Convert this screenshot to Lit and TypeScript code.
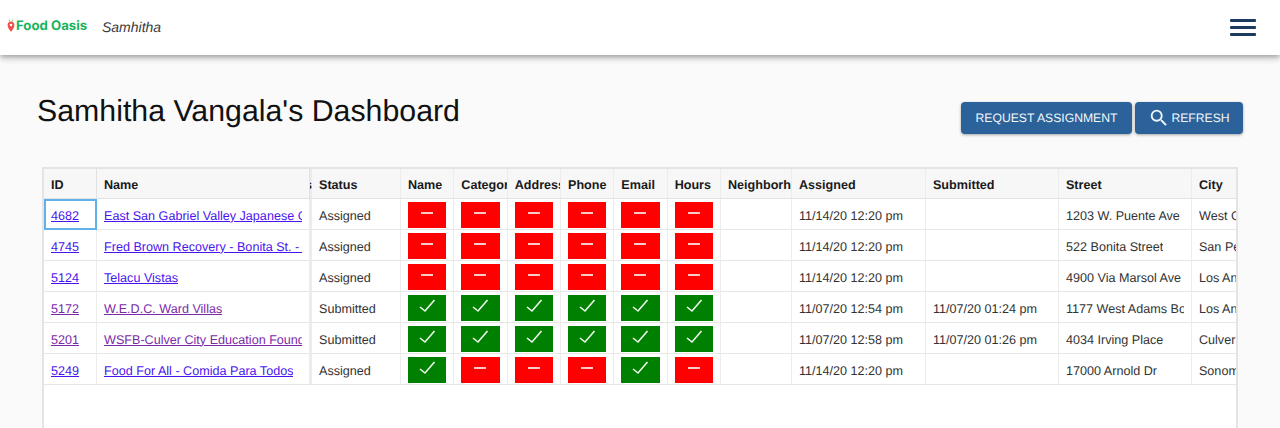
import { LitElement, html, css, svg } from "lit";
import { customElement } from "lit/decorators.js";

type Row = {
  id: string; name: string; status: string; checks: number[];
  assigned: string; submitted: string; street: string; city: string; visited?: boolean;
};

const rows: Row[] = [
  { id: "4682", name: "East San Gabriel Valley Japanese Community Center", status: "Assigned", checks: [0,0,0,0,0,0], assigned: "11/14/20 12:20 pm", submitted: "", street: "1203 W. Puente Ave", city: "West Covina" },
  { id: "4745", name: "Fred Brown Recovery - Bonita St. - San Pedro", status: "Assigned", checks: [0,0,0,0,0,0], assigned: "11/14/20 12:20 pm", submitted: "", street: "522 Bonita Street", city: "San Pedro" },
  { id: "5124", name: "Telacu Vistas", status: "Assigned", checks: [0,0,0,0,0,0], assigned: "11/14/20 12:20 pm", submitted: "", street: "4900 Via Marsol Ave", city: "Los Angeles" },
  { id: "5172", name: "W.E.D.C. Ward Villas", status: "Submitted", checks: [1,1,1,1,1,1], assigned: "11/07/20 12:54 pm", submitted: "11/07/20 01:24 pm", street: "1177 West Adams Boulevard", city: "Los Angeles", visited: true },
  { id: "5201", name: "WSFB-Culver City Education Foundation", status: "Submitted", checks: [1,1,1,1,1,1], assigned: "11/07/20 12:58 pm", submitted: "11/07/20 01:26 pm", street: "4034 Irving Place", city: "Culver City", visited: true },
  { id: "5249", name: "Food For All - Comida Para Todos", status: "Assigned", checks: [1,0,0,0,1,0], assigned: "11/14/20 12:20 pm", submitted: "", street: "17000 Arnold Dr", city: "Sonoma" },
];

const heads = ["Name", "Category", "Address", "Phone", "Email", "Hours"];

@customElement("app-root")
export class AppRoot extends LitElement {
  static styles = css`
    :host { display: block; height: 428px; overflow: hidden; background: #fafafa; font-family: "Liberation Sans", Arial, sans-serif; text-rendering: geometricPrecision; }
    .bar { height: 55px; background: #fff; box-shadow: 0 2px 4px -1px rgba(0,0,0,.2), 0 4px 5px 0 rgba(0,0,0,.14), 0 1px 10px 0 rgba(0,0,0,.12); display: flex; align-items: center; padding: 0 24px 0 7px; position: relative; }
    .logo { display: flex; align-items: center; gap: 1px; width: 95px; margin-top: -3px; }
    .logo span { color: #19b35c; font: 700 13.2px "Inter", sans-serif; }
    .user { font: italic 14px "Liberation Sans", sans-serif; color: #3a3a3a; flex: 1; margin-top: -1px; }
    .burger { display: flex; flex-direction: column; gap: 4px; width: 26px; margin-top: -1px; }
    .burger i { display: block; height: 3px; background: #1b3a5f; border-radius: 1px; }
    .head { display: flex; align-items: center; justify-content: space-between; padding: 41px 37px 0 37px; height: 37px; }
    h1 { margin: -6px 0 0; font: 400 30.3px "Liberation Sans", sans-serif; color: #111; }
    .btns { display: flex; gap: 3px; margin-top: 6px; }
    button { height: 32px; border: 0; border-radius: 4px; background: #2a6299; color: #f2f6fa; font: 500 12.2px "Liberation Sans", sans-serif; text-rendering: geometricPrecision; padding: 0; display: flex; align-items: center; justify-content: center; gap: 1px; box-shadow: 0 1px 3px rgba(0,0,0,.35); }
    .b1 { width: 171px; }
    .b2 { width: 108px; }
    .gridwrap { margin: 34px 0 0 42px; width: 1196px; height: 300px; box-sizing: border-box; border: 2px solid #e4e4e4; border-bottom: 0; background: #fff; overflow: hidden; }
    .grid { display: grid; grid-template-columns: 53px 213px 2px 89px repeat(6, 53.33px) 71px 134px 133px 133px 120px; grid-auto-rows: 31px; width: max-content; font-size: 12.6px; color: #333; margin-top: -1px; }
    .grid > div { box-sizing: border-box; border-bottom: 1px solid #e6e6e6; border-right: 1px solid #ececec; padding: 3px 7px 0; display: flex; align-items: center; white-space: nowrap; overflow: hidden; }
    .txt { display: block; overflow: hidden; min-width: 0; }
    .grid > .th { background: #f7f7f7; font-weight: 700; color: #1a1a1a; border-bottom: 1px solid #e2e2e2; padding-right: 0; }
    .th.first { border-right-color: #e2e2e2; }
    .grid > .split { padding: 0; background: #ececec; border-right: 0; justify-content: flex-end; }
    .grid > .th.split { padding-top: 3px; }
    .grid > .focus { outline: 2px solid #64b0ea; outline-offset: -2px; }
    .grid > .chk { padding: 3px 7px 2px; }
    .grid > .cityc { padding-right: 0; }
    a { color: #4a14ee; text-decoration: underline; }
    a.v { color: #7b2aa8; }
    .pill { width: 100%; height: 26px; display: flex; align-items: center; justify-content: center; }
    .pill.no { background: #ff0000; }
    .pill.yes { background: #008000; }
    .pill svg { display: block; margin-top: -4px; }
  `;

  private icon(ok: number) {
    return ok
      ? html`<svg width="18" height="18" viewBox="0 0 18 18" fill="none" stroke="#eef7ee" stroke-width="1.6">${svg`<path d="M2 10 7 14 16.500 3"/>`}</svg>`
      : html`<svg width="12" height="4" viewBox="0 0 12 4" fill="#ffc9c9">${svg`<rect y="1" width="12" height="2"/>`}</svg>`;
  }

  render() {
    return html`
      <header class="bar">
        <div class="logo">
          <svg width="8" height="14" viewBox="0 0 8 14">
            <path d="M3 3 2 0.5M4.600 3 6 0.5" stroke="#8fc46a" stroke-width="1" fill="none"/>
            <path d="M4 13C2.500 10.500.6 8.800.6 6.200a3.400 3.400 0 0 1 6.800 0C7.400 8.800 5.500 10.500 4 13Z" fill="#f0504a"/>
            <circle cx="4" cy="6" r="1.300" fill="#fff"/>
          </svg>
          <span>Food Oasis</span>
        </div>
        <div class="user">Samhitha</div>
        <div class="burger"><i></i><i></i><i></i></div>
      </header>
      <div class="head">
        <h1>Samhitha Vangala's Dashboard</h1>
        <div class="btns">
          <button class="b1">REQUEST ASSIGNMENT</button>
          <button class="b2">
            <svg width="22" height="22" viewBox="0 0 24 24" fill="#f2f6fa"><path d="M15.500 14h-.79l-.28-.27A6.470 6.470 0 0 0 16 9.500 6.500 6.500 0 1 0 9.500 16c1.610 0 3.090-.59 4.230-1.570l.27.28v.79l5 4.990L20.490 19l-4.990-5zm-6 0C7.010 14 5 11.990 5 9.500S7.010 5 9.500 5 14 7.010 14 9.500 11.990 14 9.500 14z"/></svg>
            REFRESH
          </button>
        </div>
      </div>
      <div class="gridwrap">
        <div class="grid">
          <div class="th first">ID</div>
          <div class="th first">Name</div>
          <div class="th split">s</div>
          <div class="th">Status</div>
          ${heads.map((h) => html`<div class="th">${h}</div>`)}
          <div class="th">Neighborhood</div>
          <div class="th">Assigned</div>
          <div class="th">Submitted</div>
          <div class="th">Street</div>
          <div class="th">City</div>
          ${rows.map((r, i) => html`
            <div class=${i === 0 ? "focus" : ""}><a class=${r.visited ? "v" : ""} href="#">${r.id}</a></div>
            <div><span class="txt"><a class=${r.visited ? "v" : ""} href="#">${r.name}</a></span></div>
            <div class="split"></div>
            <div>${r.status}</div>
            ${r.checks.map((c) => html`<div class="chk"><div class="pill ${c ? "yes" : "no"}">${this.icon(c)}</div></div>`)}
            <div></div>
            <div>${r.assigned}</div>
            <div>${r.submitted}</div>
            <div><span class="txt">${r.street}</span></div>
            <div class="cityc">${r.city}</div>
          `)}
        </div>
      </div>
    `;
  }
}
